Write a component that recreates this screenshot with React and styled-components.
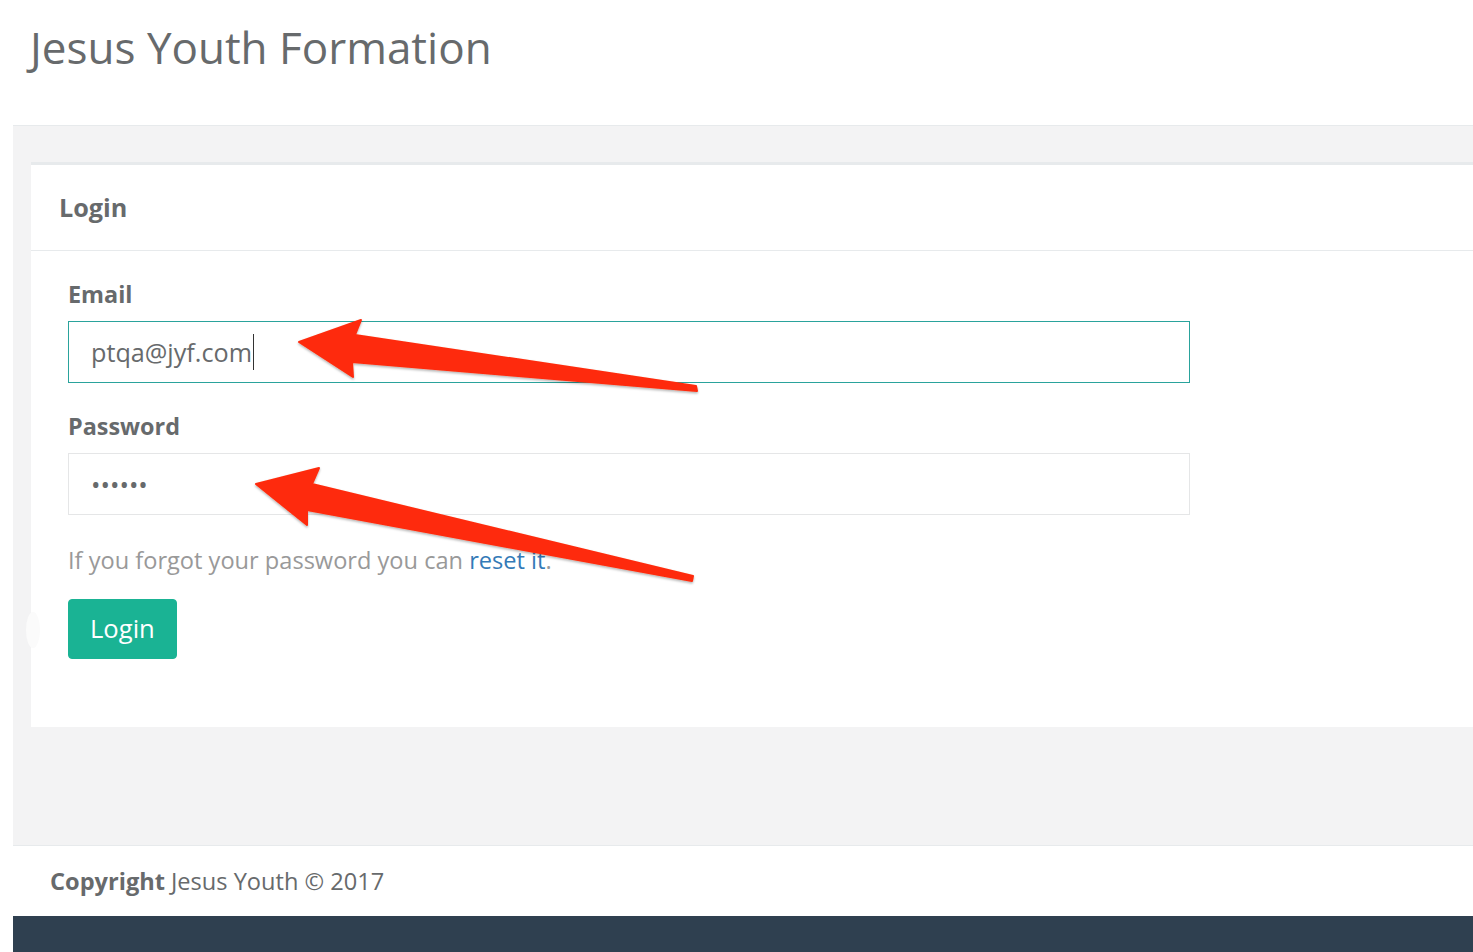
import React from "react";
import styled, { createGlobalStyle } from "styled-components";

const Global = createGlobalStyle`
  html, body { margin: 0; padding: 0; background: #ffffff; }
  body {
    font-family: "Open Sans", "Noto Sans", "Liberation Sans", sans-serif;
    color: #676a6c;
    overflow: hidden;
  }
  * { box-sizing: border-box; }
`;

const Page = styled.div`
  position: relative;
  width: 1473px;
  height: 952px;
  overflow: hidden;
`;

const Header = styled.header`
  height: 125px;
  padding: 16px 0 0 30px;
`;

const Brand = styled.h1`
  margin: 0;
  font-size: 44px;
  font-weight: 400;
  line-height: 62px;
  color: #676a6c;
`;

const Wrapper = styled.main`
  margin-left: 13px;
  background: #f3f3f4;
  border-top: 1px solid #e7eaec;
  padding: 36px 0 118px 18px;
`;

const Ibox = styled.section`
  background: #ffffff;
  border-top: 3px solid #e7eaec;
`;

const IboxTitle = styled.div`
  height: 86px;
  padding: 0 28px;
  display: flex;
  align-items: center;
  border-bottom: 1px solid #e7eaec;
`;

const IboxHeading = styled.h5`
  margin: 0;
  font-size: 25.2px;
  font-weight: 700;
  color: #676a6c;
  line-height: 1;
`;

const IboxContent = styled.div`
  padding: 27px 37px 68px;
`;

const Group = styled.div`
  display: flex;
  flex-direction: column;
  margin-bottom: ${(p) => p.$gap || 28}px;
`;

const Label = styled.label`
  font-size: 23.4px;
  font-weight: 700;
  line-height: 32px;
  margin-bottom: 11px;
  color: #676a6c;
`;

const FieldBox = styled.div`
  width: 1122px;
  height: 62px;
  border: 1px solid ${(p) => (p.$focus ? "#2aa39c" : "#e5e6e7")};
  background: #ffffff;
  padding: 0 22px;
  display: flex;
  align-items: center;
  font-size: 25.2px;
  color: #676a6c;
`;

const Caret = styled.span`
  display: inline-block;
  width: 1px;
  height: 36px;
  background: #333;
  margin-left: 1px;
`;

const PasswordInput = styled.input`
  width: 1122px;
  height: 62px;
  border: 1px solid #e5e6e7;
  background: #ffffff;
  padding: 0 22px;
  font-family: "Open Sans", "Noto Sans", sans-serif;
  font-size: 25.2px;
  color: #676a6c;
  outline: none;
`;

const Help = styled.p`
  margin: 0 0 24px;
  font-size: 23.6px;
  line-height: 30px;
  color: #999999;
`;

const Link = styled.a`
  color: #337ab7;
  text-decoration: none;
`;

const ButtonRow = styled.div`
  position: relative;
`;

const Blob = styled.span`
  position: absolute;
  left: -42px;
  top: 13px;
  width: 14px;
  height: 36px;
  border-radius: 50%;
  background: #fbfbfb;
`;

const Button = styled.button`
  height: 60px;
  padding: 0 21px;
  background: #1ab394;
  border: 1px solid #1ab394;
  border-radius: 4px;
  color: #ffffff;
  font-family: "Open Sans", "Noto Sans", sans-serif;
  font-size: 25.6px;
  line-height: 1;
  cursor: pointer;
`;

const Footer = styled.footer`
  margin-left: 13px;
  border-top: 1px solid #e7eaec;
  height: 71px;
  padding-left: 37px;
  display: flex;
  align-items: center;
  font-size: 23.6px;
  color: #676a6c;
`;

const Strong = styled.strong`
  font-weight: 700;
  margin-right: 6px;
`;

const BottomBar = styled.div`
  margin-left: 13px;
  height: 40px;
  background: #2f4050;
`;

const Overlay = styled.svg`
  position: absolute;
  left: 0;
  top: 0;
  pointer-events: none;
`;

function Arrows() {
  return (
    <Overlay width="1473" height="952" viewBox="0 0 1473 952">
      <defs>
        <filter id="sh" x="-10%" y="-20%" width="120%" height="140%">
          <feDropShadow dx="0" dy="1.5" stdDeviation="1.2" floodColor="#000" floodOpacity="0.3" />
        </filter>
      </defs>
      <g fill="#fe2c0a" stroke="#fe2c0a" strokeWidth="2" strokeLinejoin="round" filter="url(#sh)">
        <polygon points="299,342 361,320 355,335 696,386 697,391 352,362 353,377" />
        <polygon points="256,484 319,468 312,484 693,576 692,581 307,510 307,525" />
      </g>
    </Overlay>
  );
}

export default function App() {
  return (
    <Page>
      <Global />
      <Header>
        <Brand>Jesus Youth Formation</Brand>
      </Header>
      <Wrapper>
        <Ibox>
          <IboxTitle>
            <IboxHeading>Login</IboxHeading>
          </IboxTitle>
          <IboxContent>
            <Group $gap={27}>
              <Label>Email</Label>
              <FieldBox $focus role="textbox">
                ptqa@jyf.com
                <Caret />
              </FieldBox>
            </Group>
            <Group $gap={30}>
              <Label>Password</Label>
              <PasswordInput type="password" defaultValue="123456" readOnly />
            </Group>
            <Help>
              If you forgot your password you can <Link href="#">reset it</Link>.
            </Help>
            <ButtonRow>
              <Blob />
              <Button>Login</Button>
            </ButtonRow>
          </IboxContent>
        </Ibox>
      </Wrapper>
      <Footer>
        <Strong>Copyright</Strong> Jesus Youth © 2017
      </Footer>
      <BottomBar />
      <Arrows />
    </Page>
  );
}
